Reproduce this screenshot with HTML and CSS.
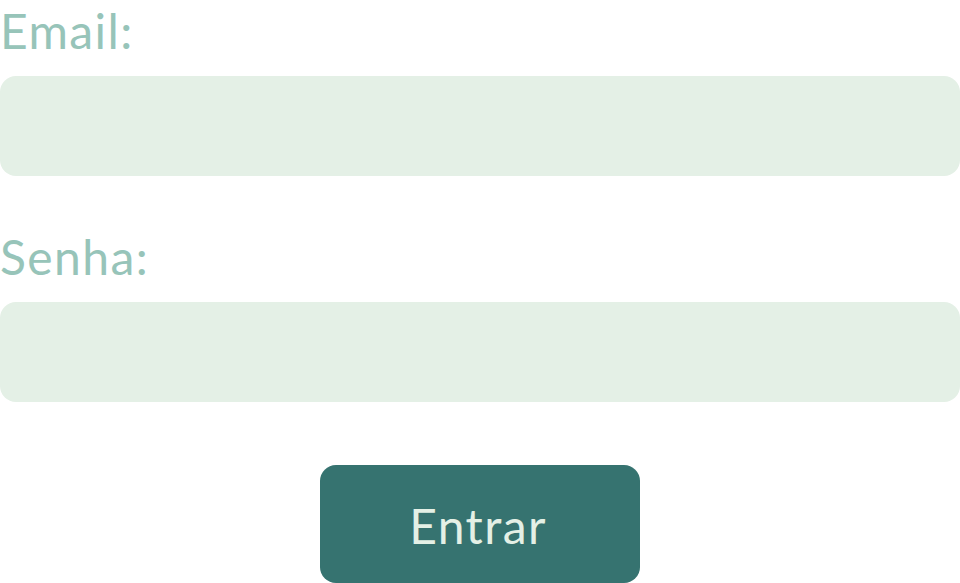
FILE: index.html
```html
<!DOCTYPE html>
<html lang="pt">
<head>
<meta charset="utf-8">
<title>Login</title>
<link rel="stylesheet" href="styles.css">
</head>
<body>
<form class="login">
  <label class="field-label" for="email">Email:</label>
  <input class="field-input" id="email" type="email">
  <label class="field-label field-label--next" for="senha">Senha:</label>
  <input class="field-input" id="senha" type="password">
  <button class="submit" type="button">Entrar</button>
</form>
</body>
</html>
```
FILE: styles.css
```css
html, body {
  margin: 0;
  padding: 0;
  background: #ffffff;
}
.login {
  display: flex;
  flex-direction: column;
  width: 960px;
  font-family: Lato, "Open Sans", sans-serif;
}
.field-label {
  display: block;
  padding-top: 2px;
  font-size: 48px;
  line-height: 58px;
  letter-spacing: 1.4px;
  color: #97c4b9;
  font-weight: 400;
}
.field-label--next {
  margin-top: 50px;
}
.field-input {
  margin-top: 16px;
  height: 100px;
  box-sizing: border-box;
  border: none;
  border-radius: 16px;
  background: #e4f0e6;
  outline: none;
  padding: 0 20px;
  font-size: 32px;
}
.submit {
  align-self: center;
  margin-top: 63px;
  width: 320px;
  height: 118px;
  border: none;
  border-radius: 16px;
  background: #367370;
  color: #e4f0e6;
  font-family: Lato, "Open Sans", sans-serif;
  font-size: 48px;
  line-height: 58px;
  letter-spacing: 1.4px;
  padding: 4px 4px 0 0;
}
```
